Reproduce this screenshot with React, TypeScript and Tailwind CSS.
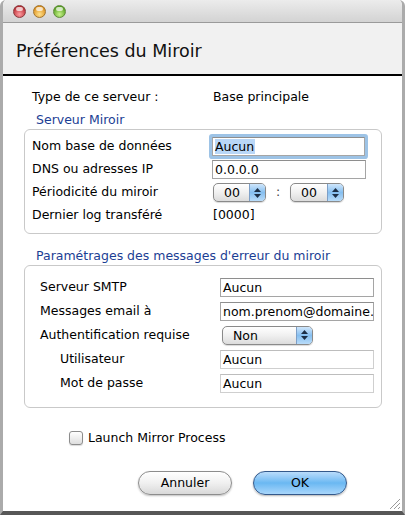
import React from 'react';

const font = { fontFamily: '"DejaVu Sans", "Liberation Sans", sans-serif' };

const TextField: React.FC<{ value: string; width: string; focus?: boolean; faded?: boolean }> = ({ value, width, focus, faded }) => (
  <div
    className={`${width} h-[19px] bg-white border overflow-hidden whitespace-nowrap pl-[2px] leading-[17px] text-[12.5px] text-black ${
      faded ? 'border-[#cfcfcf] border-t-[#bdbdbd]' : 'border-[#a5a5a5] border-t-[#8e8e8e]'
    } ${focus ? 'shadow-[0_0_0_3px_#9dc3e6] rounded-[1px]' : ''}`}
  >
    {focus ? <span className="bg-[#b9d7f7] pr-[1px]">{value}</span> : value}
  </div>
);

const PopUp: React.FC<{ value: string; width: string }> = ({ value, width }) => (
  <div
    className={`${width} h-[19px] flex rounded-[5px] border border-[#8a8a8a] overflow-hidden bg-gradient-to-b from-[#ffffff] via-[#f0f0f0] to-[#dcdcdc] shadow-[0_1px_1px_rgba(0,0,0,0.15)]`}
  >
    <div className="flex-1 pl-[10px] leading-[17px] text-[12.5px] text-black">{value}</div>
    <div className="w-[16px] border-l border-[#7d9fc7] bg-gradient-to-b from-[#cfe6fb] via-[#86bff0] to-[#b9dcf9] flex flex-col items-center justify-center gap-[2px]">
      <svg width="7" height="4" viewBox="0 0 7 4"><path d="M0 4 L3.5 0 L7 4 Z" fill="#1d2f46" /></svg>
      <svg width="7" height="4" viewBox="0 0 7 4"><path d="M0 0 L3.5 4 L7 0 Z" fill="#1d2f46" /></svg>
    </div>
  </div>
);

const Light: React.FC<{ from: string; to: string; ring: string }> = ({ from, to, ring }) => (
  <div
    className={`w-[13px] h-[13px] rounded-full border ${ring}`}
    style={{ background: `radial-gradient(circle at 50% 75%, ${to} 0%, ${from} 80%)` }}
  >
    <div className="mx-auto mt-[1px] w-[7px] h-[4px] rounded-full bg-white/70" />
  </div>
);

export default function App() {
  return (
    <div className="w-[405px] h-[515px] bg-white text-black" style={font}>
      <div className="w-full h-full flex flex-col border-x-[3px] border-x-[#ababab] border-b-[4px] border-b-[#575757] rounded-t-[6px] overflow-hidden">
        {/* title bar */}
        <div className="h-[23px] shrink-0 bg-gradient-to-b from-[#ececec] to-[#d3d3d3] border-b border-[#9a9a9a] flex items-center gap-[7px] pl-[10px]">
          <Light from="#b3262c" to="#ff9ba0" ring="border-[#8a3a3e]" />
          <Light from="#d98a16" to="#ffe08a" ring="border-[#a0742e]" />
          <Light from="#4f9a1a" to="#c8f38a" ring="border-[#5f8a3a]" />
        </div>

        {/* header */}
        <div className="h-[53px] shrink-0 bg-[#f1f1f1] border-b-2 border-black flex items-center pl-[13px] pt-[5px]">
          <span className="text-[17.5px] text-[#111]">Préférences du Miroir</span>
        </div>

        {/* content */}
        <div className="flex-1 flex flex-col pl-[21px] pr-[20px] text-[12.5px]">
          <div className="flex h-[16px] mt-[13px] leading-[16px] pl-[8px]">
            <span className="w-[181px]">Type de ce serveur :</span>
            <span>Base principale</span>
          </div>

          <div className="mt-[7px] pl-[12px] h-[16px] leading-[16px] text-[#1b3e94]">Serveur Miroir</div>

          <div className="mt-[1px] border border-[#c9c9c9] rounded-[6px] pt-[5px] pb-[6px] pl-[7px]">
            <div className="flex items-center h-[23px]">
              <span className="w-[180px]">Nom base de données</span>
              <TextField value="Aucun" width="w-[153px]" focus />
            </div>
            <div className="flex items-center h-[23px]">
              <span className="w-[180px]">DNS ou adresses IP</span>
              <TextField value="0.0.0.0" width="w-[154px]" />
            </div>
            <div className="flex items-center h-[23px]">
              <span className="w-[181px]">Périodicité du miroir</span>
              <PopUp value="00" width="w-[53px]" />
              <span className="w-[24px] text-center text-[#444]">:</span>
              <PopUp value="00" width="w-[54px]" />
            </div>
            <div className="flex items-center h-[23px]">
              <span className="w-[181px]">Dernier log transféré</span>
              <span>[0000]</span>
            </div>
          </div>

          <div className="mt-[14px] pl-[12px] h-[16px] leading-[16px] text-[#1b3e94]">Paramétrages des messages d'erreur du miroir</div>

          <div className="mt-[1px] border border-[#c9c9c9] rounded-[6px] pt-[9px] pb-[12px] pl-[15px]">
            <div className="flex items-center h-[24px]">
              <span className="w-[180px]">Serveur SMTP</span>
              <TextField value="Aucun" width="w-[154px]" />
            </div>
            <div className="flex items-center h-[24px]">
              <span className="w-[180px]">Messages email à</span>
              <TextField value="nom.prenom@domaine." width="w-[154px]" />
            </div>
            <div className="flex items-center h-[24px]">
              <span className="w-[182px]">Authentification requise</span>
              <PopUp value="Non" width="w-[91px]" />
            </div>
            <div className="flex items-center h-[24px]">
              <span className="w-[160px] ml-[20px]">Utilisateur</span>
              <TextField value="Aucun" width="w-[154px]" faded />
            </div>
            <div className="flex items-center h-[24px]">
              <span className="w-[160px] ml-[20px]">Mot de passe</span>
              <TextField value="Aucun" width="w-[154px]" faded />
            </div>
          </div>

          <div className="mt-[22px] flex items-center pl-[45px] h-[16px]">
            <div className="w-[14px] h-[14px] rounded-[3px] border border-[#8c8c8c] bg-gradient-to-b from-[#ffffff] to-[#dedede] shadow-[0_1px_1px_rgba(0,0,0,0.15)]" />
            <span className="ml-[5px]">Launch Mirror Process</span>
          </div>

          <div className="mt-[25px] flex pl-[114px] gap-[21px]">
            <button className="w-[94px] h-[24px] rounded-full border border-[#8d8d8d] bg-gradient-to-b from-[#ffffff] via-[#f0f0f0] to-[#d9d9d9] shadow-[0_1px_2px_rgba(0,0,0,0.25)] text-[12.5px] text-black" style={font}>
              Annuler
            </button>
            <button className="w-[94px] h-[24px] rounded-full border border-[#34598b] bg-gradient-to-b from-[#b9dcfb] via-[#6ab8f2] to-[#a8d6fb] shadow-[0_1px_2px_rgba(0,0,0,0.3)] text-[12.5px] text-black" style={font}>
              OK
            </button>
          </div>

          <div className="flex-1 flex justify-end items-end">
            <svg width="14" height="14" viewBox="0 0 14 14" className="mb-[1px] -mr-[19px]">
              <path d="M13 3 L3 13 M13 7 L7 13 M13 11 L11 13" stroke="#9a9a9a" strokeWidth="1" />
            </svg>
          </div>
        </div>
      </div>
    </div>
  );
}
